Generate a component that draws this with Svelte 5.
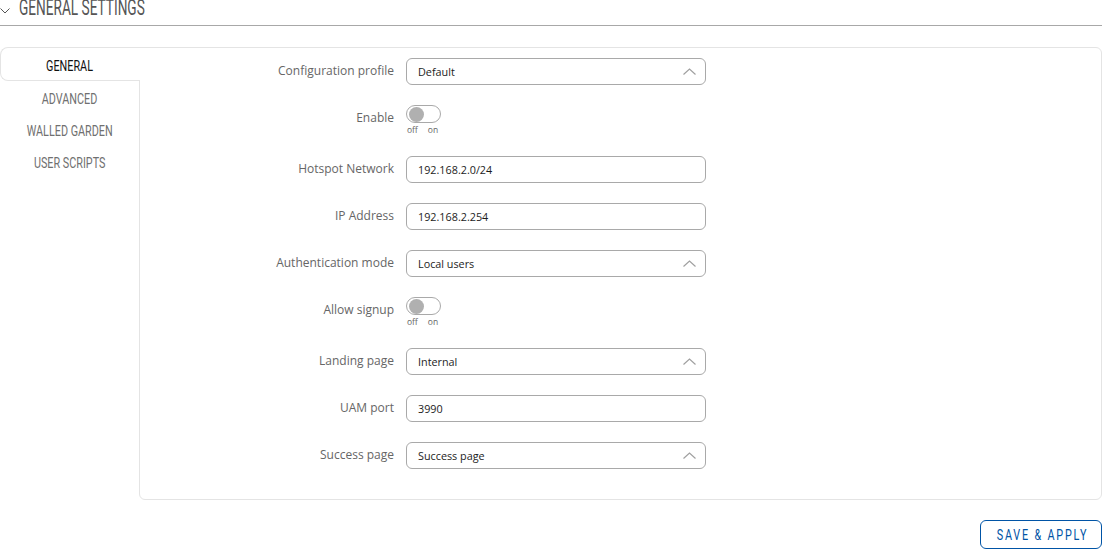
<script>
  const tabs = ['General', 'Advanced', 'Walled garden', 'User scripts'];
  const fields = [
    { label: 'Configuration profile', type: 'select', value: 'Default' },
    { label: 'Enable', type: 'toggle' },
    { label: 'Hotspot Network', type: 'input', value: '192.168.2.0/24' },
    { label: 'IP Address', type: 'input', value: '192.168.2.254' },
    { label: 'Authentication mode', type: 'select', value: 'Local users' },
    { label: 'Allow signup', type: 'toggle' },
    { label: 'Landing page', type: 'select', value: 'Internal' },
    { label: 'UAM port', type: 'input', value: '3990' },
    { label: 'Success page', type: 'select', value: 'Success page' }
  ];
</script>

<div class="page">
  <header class="section-title">
    <svg class="chevron" width="10" height="6" viewBox="0 0 10 6"><path d="M0.5 0.5 L5 5 L9.5 0.5" fill="none" stroke="#555" stroke-width="1" /></svg>
    <h2>General settings</h2>
  </header>

  <div class="panel">
    <nav class="tabs">
      {#each tabs as tab, i}
        <div class="tab" class:active={i === 0}><span>{tab}</span></div>
      {/each}
    </nav>
    <div class="content">
      {#each fields as field}
        <div class="row">
          <div class="label">{field.label}</div>
          {#if field.type === 'toggle'}
            <div class="toggle-wrap">
              <div class="toggle"><span class="knob"></span></div>
              <div class="toggle-text"><span>off</span><span>on</span></div>
            </div>
          {:else}
            <div class="field">
              <span>{field.value}</span>
              {#if field.type === 'select'}
                <svg width="13" height="7" viewBox="0 0 13 7"><path d="M0.5 6.5 L6.5 1 L12.5 6.5" fill="none" stroke="#a0a0a0" stroke-width="1.2" /></svg>
              {/if}
            </div>
          {/if}
        </div>
      {/each}
    </div>
  </div>

  <div class="actions">
    <button class="save"><span>Save &amp; apply</span></button>
  </div>
</div>

<style>
  :global(body) {
    margin: 0;
    background: #fff;
    overflow: hidden;
  }

  .page {
    width: 1102px;
    height: 549px;
    font-family: "Open Sans", sans-serif;
    overflow: hidden;
  }

  .section-title {
    height: 25px;
    display: flex;
    align-items: flex-start;
    gap: 9px;
    border-bottom: 1px solid #a8a8a8;
  }

  .chevron {
    margin-top: 8px;
    flex-shrink: 0;
  }

  .section-title h2 {
    margin: -4px 0 0;
    font-family: Roboto, sans-serif;
    font-size: 22px;
    line-height: 24px;
    font-weight: 400;
    text-transform: uppercase;
    color: #555;
    white-space: nowrap;
    transform: scaleX(0.62);
    transform-origin: left center;
  }

  .panel {
    display: flex;
    margin-top: 21px;
  }

  .tabs {
    width: 139px;
    flex-shrink: 0;
    font-family: Roboto, sans-serif;
    font-size: 15px;
    text-transform: uppercase;
    color: #707070;
    text-align: center;
  }

  .tab {
    height: 32px;
    line-height: 34px;
    white-space: nowrap;
  }

  .tab span {
    display: inline-block;
    transform: scaleX(0.72);
  }

  .tab.active {
    height: 34px;
    width: 140px;
    line-height: 36px;
    margin-bottom: 1px;
    padding-right: 2px;
    box-sizing: border-box;
    color: #111;
    background: #fff;
    border: 1px solid #e4e4e4;
    border-right: none;
    border-radius: 8px 0 0 8px;
    position: relative;
    z-index: 1;
  }

  .content {
    flex: 1;
    height: 453px;
    box-sizing: border-box;
    border: 1px solid #e4e4e4;
    border-radius: 0 6px 6px 6px;
    padding-top: 10px;
    display: flex;
    flex-direction: column;
    gap: 20px;
  }

  .row {
    display: flex;
    align-items: flex-start;
    gap: 12px;
  }

  .label {
    width: 254px;
    text-align: right;
    font-size: 12px;
    line-height: 26px;
    color: #666;
  }

  .field {
    width: 300px;
    height: 27px;
    box-sizing: border-box;
    border: 1px solid #a9a9a9;
    border-radius: 6px;
    padding: 0 9px 0 11px;
    display: flex;
    align-items: center;
    justify-content: space-between;
    font-size: 10.8px;
    color: #1c1c1c;
  }

  .toggle-wrap {
    width: 36px;
    height: 31px;
  }

  .toggle {
    width: 35px;
    height: 18px;
    box-sizing: border-box;
    border: 1px solid #a9a9a9;
    border-radius: 9px;
    padding: 0.5px 1.5px;
  }

  .knob {
    display: block;
    width: 15px;
    height: 15px;
    border-radius: 50%;
    background: #b0b0b0;
  }

  .toggle-text {
    display: flex;
    gap: 10px;
    padding-left: 1px;
    font-size: 8.5px;
    line-height: 13px;
    color: #666;
  }

  .actions {
    display: flex;
    justify-content: flex-end;
    margin-top: 20px;
  }

  .save {
    width: 122px;
    height: 29px;
    border: 1px solid #0054a6;
    border-radius: 6px;
    background: #fff;
    color: #0054a6;
    font-family: Roboto, sans-serif;
    font-size: 15px;
    letter-spacing: 2.5px;
    text-transform: uppercase;
    padding: 1px 0 0 2px;
    white-space: nowrap;
  }

  .save span {
    display: inline-block;
    margin: 0 -20px;
    transform: scaleX(0.72);
  }
</style>
